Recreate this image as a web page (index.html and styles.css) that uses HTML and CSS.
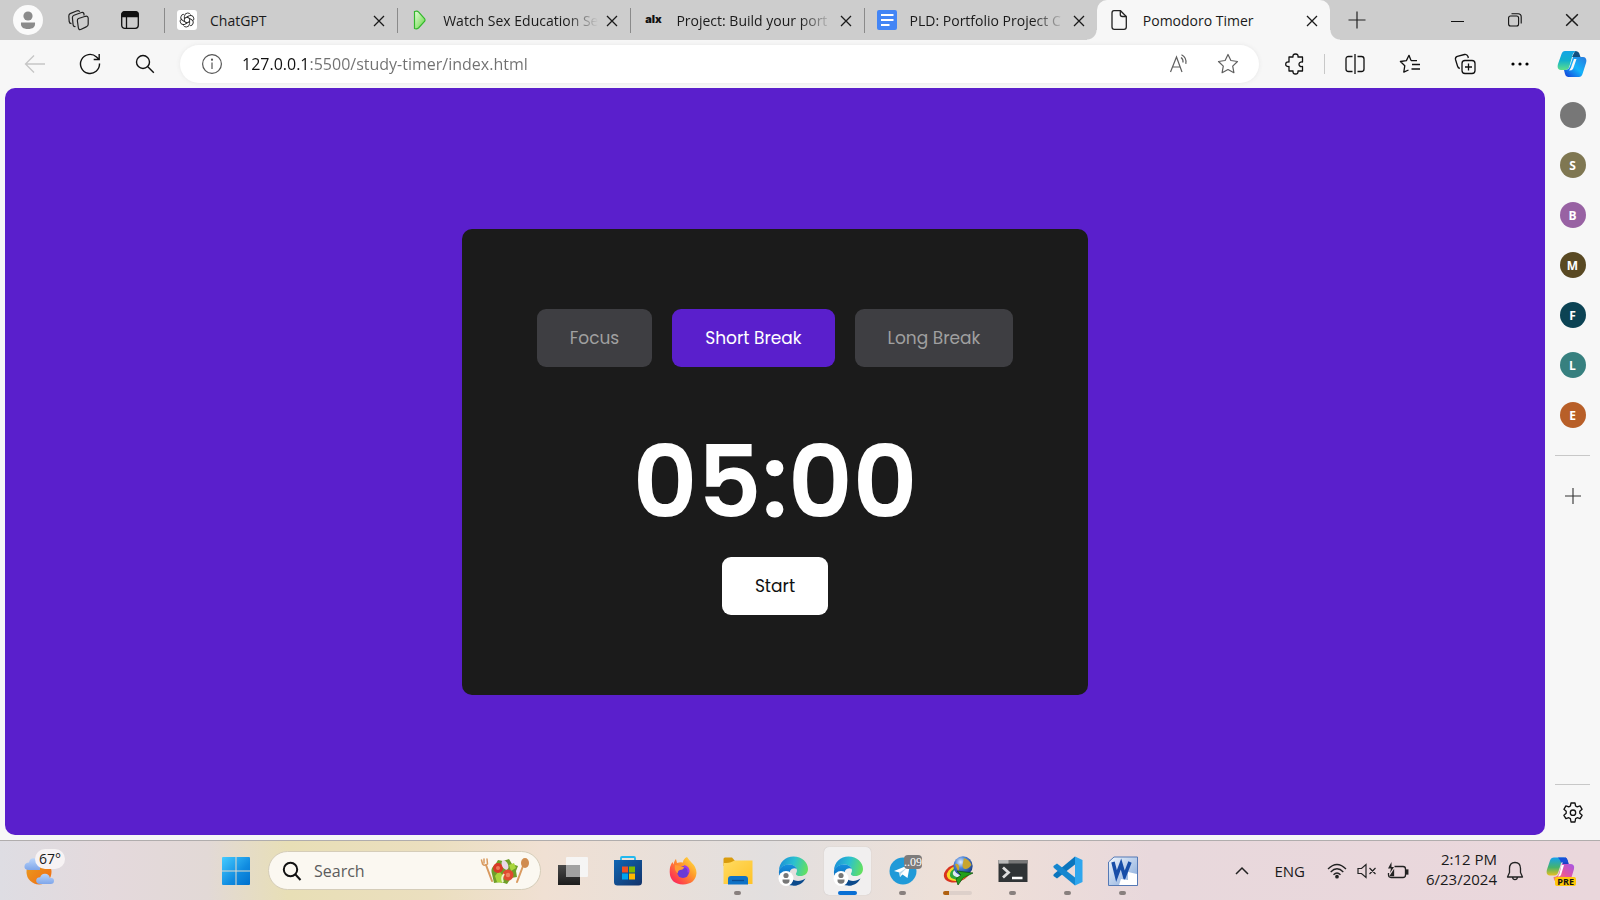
FILE: index.html
```html
<!DOCTYPE html>
<html lang="en">
<head>
<meta charset="utf-8">
<title>Pomodoro Timer</title>
<link rel="stylesheet" href="styles.css">
</head>
<body>
<svg class="defs" width="0" height="0" aria-hidden="true">
  <defs>
    <linearGradient id="edgeTop" x1="0" y1="0.3" x2="1" y2="0.5"><stop offset="0" stop-color="#1b8fd8"/><stop offset=".5" stop-color="#2bc0d0"/><stop offset="1" stop-color="#63e060"/></linearGradient>
    <linearGradient id="edgeMid" x1="0" y1="0" x2="0" y2="1"><stop offset="0" stop-color="#1490df"/><stop offset="1" stop-color="#0c5aa8"/></linearGradient>
    <linearGradient id="cpA" x1="0" y1="0" x2="0" y2="1"><stop offset="0" stop-color="#12a5e6"/><stop offset=".5" stop-color="#12b0cc"/><stop offset="1" stop-color="#5ee08a"/></linearGradient>
    <linearGradient id="cpB" x1="0" y1="1" x2="1" y2="0"><stop offset="0" stop-color="#1238d8"/><stop offset=".5" stop-color="#14b4fa"/><stop offset="1" stop-color="#2a78dc"/></linearGradient>
    <linearGradient id="preA" x1="0" y1="0" x2="0" y2="1"><stop offset="0" stop-color="#14a0ee"/><stop offset=".55" stop-color="#46b36c"/><stop offset="1" stop-color="#e8c020"/></linearGradient>
    <linearGradient id="preB" x1="1" y1="0" x2="0" y2="1"><stop offset="0" stop-color="#a356e8"/><stop offset=".5" stop-color="#e4569f"/><stop offset="1" stop-color="#ff8c52"/></linearGradient>
    <linearGradient id="win" x1="0" y1="0" x2="1" y2="1"><stop offset="0" stop-color="#45ccff"/><stop offset=".6" stop-color="#108be0"/><stop offset="1" stop-color="#0070cc"/></linearGradient>
    <linearGradient id="play" x1="0" y1="0" x2="1" y2="1"><stop offset="0" stop-color="#e8fbdc"/><stop offset="1" stop-color="#62d840"/></linearGradient>
    <linearGradient id="sun" x1="0" y1="0" x2="1" y2="1"><stop offset="0" stop-color="#e8a020"/><stop offset="1" stop-color="#f26a12"/></linearGradient>
    <linearGradient id="cloud" x1="0" y1="0" x2="0" y2="1"><stop offset="0" stop-color="#b9d4fa"/><stop offset="1" stop-color="#7fa6ea"/></linearGradient>
    <linearGradient id="folder" x1="0" y1="0" x2="1" y2="1"><stop offset="0" stop-color="#ffdb62"/><stop offset="1" stop-color="#ffc226"/></linearGradient>
    <linearGradient id="fox" x1="1" y1="0" x2="0" y2="1"><stop offset="0" stop-color="#fff04a"/><stop offset=".4" stop-color="#ff9a2a"/><stop offset=".8" stop-color="#ff3a4e"/><stop offset="1" stop-color="#e8207a"/></linearGradient>
    <linearGradient id="store" x1="0" y1="0" x2="1" y2="1"><stop offset="0" stop-color="#0f66b4"/><stop offset="1" stop-color="#13336a"/></linearGradient>
    <linearGradient id="tvDark" x1="0" y1="0" x2="0" y2="1"><stop offset="0" stop-color="#4a4a4a"/><stop offset="1" stop-color="#1d1d1d"/></linearGradient>
    <linearGradient id="word" x1="0" y1="0" x2="1" y2="1"><stop offset="0" stop-color="#f2f7fd"/><stop offset="1" stop-color="#7fa4d8"/></linearGradient>
    <radialGradient id="globe" cx=".38" cy=".3" r=".75"><stop offset="0" stop-color="#e6f0ff"/><stop offset=".4" stop-color="#4f86d8"/><stop offset="1" stop-color="#16357c"/></radialGradient>
    <symbol id="x" viewBox="0 0 12 12"><path d="M1 1l10 10M11 1L1 11" fill="none" stroke="currentColor" stroke-width="1.3"/></symbol>
    <symbol id="edge" viewBox="0 0 30 30">
      <path d="M1 15C1 6 7.500 .5 15.500 .5 24 .5 30 6.500 30 13c0 4.500-3.500 7-7.500 7-3 0-5-1.200-4.500-2.600.8-1.600 1.200-2.400.8-4C18 10 14.500 8.500 11 8.500 6 8.500 2 11.500 1 15z" fill="url(#edgeTop)"/>
      <path d="M1 15c1-4 5-6.500 10-6.500 4 0 7 2 7.700 4.500C17 11.800 13 12 11.500 16c-1.500 5 3 11 8 13C9 31.500 0 25 1 15z" fill="url(#edgeMid)"/>
      <path d="M12 15c-2 6 3 10 8 10 3 0 5-1 7.500-2.500C25 27.500 20 30 15.500 29.500 9 28 8 19 12 15z" fill="#0b4a8c"/>
      <circle cx="8" cy="22.500" r="7.500" fill="#fff"/><circle cx="8" cy="19.500" r="2.600" fill="#777"/><path d="M4.500 23.500h7c.4 3-1.200 4.200-3.500 4.200s-3.900-1.200-3.500-4.200z" fill="#777"/>
    </symbol>
  </defs>
</svg>

<main class="browser">
  <header class="tabbar">
    <button class="strip-btn" aria-label="Profile"><svg width="30" height="30" viewBox="0 0 30 30"><circle cx="15" cy="15" r="15" fill="#fafafa"/><circle cx="15" cy="11" r="4.600" fill="#8b8b8b"/><path d="M8 17.500h14c.6 4.500-2.200 6.500-7 6.500s-7.600-2-7-6.500z" fill="#8b8b8b"/></svg></button>
    <button class="strip-btn" aria-label="Workspaces"><svg width="22" height="22" viewBox="0 0 22 22" fill="none" stroke="#222" stroke-width="1.200" stroke-linejoin="round"><path d="M10.500 9.500l7-2.200q2.500-.5 2.700 2v6q0 2-2 2.600l-5.500 2.600q-2 .5-2.300-1.500l-1-7q-.2-2 1.100-2.500z"/><path d="M7.500 17.500q-2 .3-2.400-1.700l-.7-7Q4.300 6.800 6 6.200l7.500-2.700q2-.5 2.500 1.500v1.500"/><path d="M3.500 14.700q-2 0-2.300-2l-.4-5.500q0-2 1.300-2.600l7-2.800q2-.5 2.600 1"/></svg></button>
    <button class="strip-btn" aria-label="Tab actions"><svg width="18" height="18" viewBox="0 0 18 18" fill="none" stroke="#111" stroke-width="1.300"><rect x=".7" y=".7" width="16.600" height="16.600" rx="3"/><path d="M1 3.500Q1 1 3.500 1h11Q17 1 17 3.500V5.500H1z" fill="#111"/><path d="M5.500 5v12"/></svg></button>
    <nav class="tabs" aria-label="Tabs">
      <div class="tab">
        <svg class="fav" viewBox="0 0 20 20"><rect width="20" height="20" rx="3" fill="#fff"/><g fill="none" stroke="#222" stroke-width=".9"><path id="petal" d="M7.400 11.500V6.300Q7.700 3 10.700 3q1.900 0 2.900 1.500"/><use href="#petal" transform="rotate(60 10 10)"/><use href="#petal" transform="rotate(120 10 10)"/><use href="#petal" transform="rotate(180 10 10)"/><use href="#petal" transform="rotate(240 10 10)"/><use href="#petal" transform="rotate(300 10 10)"/></g></svg>
        <button class="title">ChatGPT</button><button class="close" aria-label="Close tab"><svg width="12" height="12"><use href="#x"/></svg></button>
      </div>
      <div class="tab">
        <svg class="fav" viewBox="0 0 20 20"><path d="M4.500 1.500q3-1 4 .5l6 6.500q1 1.500 0 3l-6 6.500q-2 1.500-4 .5z" fill="url(#play)" stroke="#32b82c" stroke-width="1.200"/></svg>
        <button class="title fade">Watch Sex Education Se</button><button class="close" aria-label="Close tab"><svg width="12" height="12"><use href="#x"/></svg></button>
      </div>
      <div class="tab">
        <span class="fav alx">alx</span>
        <button class="title fade">Project: Build your port</button><button class="close" aria-label="Close tab"><svg width="12" height="12"><use href="#x"/></svg></button>
      </div>
      <div class="tab">
        <svg class="fav" viewBox="0 0 20 20"><rect width="20" height="20" rx="2" fill="#4385f5"/><path d="M4 5h12.500M4 10h12.500M4 15h8.500" stroke="#fff" stroke-width="2.200"/></svg>
        <button class="title fade">PLD: Portfolio Project C</button><button class="close" aria-label="Close tab"><svg width="12" height="12"><use href="#x"/></svg></button>
      </div>
      <div class="tab active">
        <svg class="fav" viewBox="0 0 20 20" fill="none" stroke="#222" stroke-width="1.300"><path d="M4 .7h6.500L16.300 6.500V17q0 2.300-2.300 2.300H4.300Q2 19.300 2 17V3Q2 .7 4 .7z"/><path d="M10.300 1v3.500q0 2 2 2h4"/></svg>
        <button class="title">Pomodoro Timer</button><button class="close" aria-label="Close tab"><svg width="12" height="12"><use href="#x"/></svg></button>
      </div>
    </nav>
    <button class="newtab" aria-label="New tab"><svg width="18" height="18"><path d="M9 .5v17M.5 9h17" stroke="#222" stroke-width="1.200"/></svg></button>
    <div class="window-controls">
      <button aria-label="Minimize"><svg width="13" height="13"><path d="M0 7.500h13" stroke="#111"/></svg></button>
      <button aria-label="Restore"><svg width="14" height="14" fill="none" stroke="#111" stroke-width="1.100"><rect x=".6" y="3" width="10" height="10" rx="2"/><path d="M3.500 .8H10q3.200 0 3.200 3.200v6.500"/></svg></button>
      <button aria-label="Close"><svg width="14" height="14"><use href="#x"/></svg></button>
    </div>
  </header>

  <div class="toolbar">
    <button class="tool" aria-label="Back"><svg width="22" height="20" fill="none" stroke="#c6c6c6" stroke-width="1.300"><path d="M21 10H2M10 1.500L1.500 10l8.500 8.500"/></svg></button>
    <button class="tool" aria-label="Refresh"><svg width="22" height="22" fill="none" stroke="#111" stroke-width="1.400"><path d="M20.500 10.500A9.500 9.500 0 1 1 17.500 4l2.500 2.300M20.200 1v5.500h-5.500"/></svg></button>
    <button class="tool" aria-label="Search"><svg width="20" height="20" fill="none" stroke="#111" stroke-width="1.400"><circle cx="8" cy="8" r="6.500"/><path d="M12.800 12.800l6 6"/></svg></button>
    <div class="address">
      <button aria-label="Site information"><svg width="22" height="22" fill="none" stroke="#555" stroke-width="1.200"><circle cx="11" cy="11" r="9.400"/><path d="M11 9.500V16" /><circle cx="11" cy="6.700" r=".5" fill="#555"/></svg></button>
      <input class="url" type="text" aria-label="Address" value="127.0.0.1:5500/study-timer/index.html">
      <button class="read" aria-label="Read aloud"><svg width="22" height="20" viewBox="0 0 22 20" fill="none" stroke="#5f5f5f" stroke-width="1.200"><path d="M1.500 18L7.500 3 13 18M3.500 13h7.500M12 3.500q2.500 1.800 2 5M12.500 .8q5.500 3 4.300 9"/></svg></button>
      <button class="star" aria-label="Favorite"><svg width="22" height="22" viewBox="0 0 22 22" fill="none" stroke="#5f5f5f" stroke-width="1.200" stroke-linejoin="round"><path d="M11 1.500l2.900 6 6.600 1-4.800 4.600 1.200 6.600-5.900-3.200-5.900 3.200 1.200-6.600L1.500 8.500l6.600-1z"/></svg></button>
    </div>
    <button class="tool" aria-label="Extensions"><svg width="20" height="22" viewBox="0 0 20 22" fill="none" stroke="#111" stroke-width="1.300" stroke-linejoin="round"><path d="M4 4h4q-.5-3 2.500-3T13 4h4.500v5q-3.500-.3-3.500 2.300t3.500 2.200V18H13q.4 3-2.500 3T8 18H4v-4.500q-3.300.3-3.300-2.300T4 9z"/></svg></button>
    <span class="rule"></span>
    <button class="tool" aria-label="Split screen"><svg width="20" height="20" fill="none" stroke="#111" stroke-width="1.300"><path d="M7.500 2.500H3.500q-2.500 0-2.500 2.500v10q0 2.500 2.500 2.500h4M12.500 2.500h4q2.500 0 2.500 2.500v10q0 2.500-2.500 2.500h-4M10 0v20"/></svg></button>
    <button class="tool" aria-label="Favorites"><svg width="22" height="20" viewBox="0 0 22 20" fill="none" stroke="#111" stroke-width="1.300" stroke-linejoin="round"><path d="M12 6.500L10 1.300 7.400 6.600l-6 .9 4.400 4.200-1 6.500L9.500 16M12 6.500l6 .2M13 10.500h8M12.500 15h8.500"/></svg></button>
    <button class="tool" aria-label="Collections"><svg width="22" height="22" viewBox="0 0 22 22" fill="none" stroke="#111" stroke-width="1.300" stroke-linejoin="round"><rect x="8" y="7.500" width="13" height="13" rx="3"/><path d="M14.500 10.500v7M11 14h7M5.800 15.500Q4 15 3.500 13L1.500 6.500Q1 4 3.300 3.300L10.500 1.500Q13 1 14 3.500l.3 1.500"/></svg></button>
    <button class="tool" aria-label="Settings and more"><svg width="20" height="6"><circle cx="3" cy="3" r="1.600"/><circle cx="10" cy="3" r="1.600"/><circle cx="17" cy="3" r="1.600"/></svg></button>
    <button class="tool copilot" aria-label="Copilot"><svg width="30" height="28" viewBox="0 0 30 28"><path d="M18 1q3.500 0 4.300 2.500L23.500 7H15z" fill="#124f80"/><path d="M8 1h11q-3 1-4 6l-2.500 9q-1 4-4 4H4Q-.5 19.500 1 14L4.500 4Q5.500 1 8 1z" fill="url(#cpA)"/><path d="M22 27H11q-2.500-.2-3-3l-1-4h2q3-.5 4-4l3-9h10q4.500 .5 3 6l-3.500 11Q24.500 27 22 27z" fill="url(#cpB)"/><path d="M17 9h2.500l-3.500 10q-1 1.500-4 1.500 2-2 2.500-4.500z" fill="#f7f7f7"/></svg></button>
  </div>

  <div class="content">
    <section class="page">
      <div class="card">
        <div class="modes">
          <button class="btn muted">Focus</button>
          <button class="btn current">Short Break</button>
          <button class="btn muted">Long Break</button>
        </div>
        <div class="time">05:00</div>
        <button class="btn start">Start</button>
      </div>
    </section>
    <aside class="sidebar">
      <button class="avatar grey" aria-label="Contact"></button>
      <button class="avatar olive">S</button>
      <button class="avatar purple">B</button>
      <button class="avatar brown">M</button>
      <button class="avatar navy">F</button>
      <button class="avatar teal">L</button>
      <button class="avatar orange">E</button>
      <hr>
      <button class="side-btn" aria-label="Add"><svg width="16" height="16"><path d="M8 0v16M0 8h16" stroke="#333" stroke-width="1.100"/></svg></button>
      <hr class="low">
      <button class="side-btn" aria-label="Settings"><svg width="22" height="22" viewBox="0 0 22 22" fill="none" stroke="#111" stroke-width="1.300" stroke-linejoin="round"><path d="M9 1h4l.6 3 1.600.9 2.900-1 2 3.400-2.300 2v2l2.300 2-2 3.400-2.900-1-1.600.9-.6 3.400H9l-.6-3.400-1.600-.9-2.900 1-2-3.400 2.300-2v-2l-2.300-2 2-3.400 2.900 1L8.400 4z"/><circle cx="11" cy="10.700" r="2.700"/></svg></button>
    </aside>
  </div>
</main>

<footer class="taskbar">
  <button class="weather" aria-label="Weather">
    <svg width="32" height="30" viewBox="0 0 32 30"><circle cx="15" cy="16" r="12.500" fill="url(#sun)"/><path d="M4 14q-4-.5-3.500-4T5 6.500q1-5 6-4t5 5.500 0 6z" fill="url(#cloud)"/><path d="M16 28q-4-.3-3.800-3.500t4-3.200q1-3.800 5-3.500t4.600 4q4.200-.2 4.200 3t-3.500 3.200z" fill="url(#cloud)"/></svg>
    <span class="temp">67°</span>
  </button>
  <button class="task" aria-label="Start menu"><svg width="30" height="30" viewBox="0 0 30 30"><path fill="url(#win)" d="M2 1h12.500v13.500H1V2q0-1 1-1zM15.500 1H28q1 0 1 1v12.500H15.500zM1 15.500h13.500V29H2q-1 0-1-1zM15.500 15.500H29V28q0 1-1 1H15.500z"/></svg></button>
  <label class="search">
    <svg width="20" height="20" fill="none" stroke="#111" stroke-width="2"><circle cx="8.500" cy="8.500" r="6.700"/><path d="M13 13l5.500 6"/></svg>
    <input type="text" placeholder="Search" aria-label="Search">
    <svg width="50" height="28" viewBox="0 0 50 28"><g stroke="#d99a5f" stroke-linecap="round" fill="none"><path d="M6 8l6 16" stroke-width="2"/><path d="M1.500 3l1 4q2 2.500 5 0L7 2M4 2v4" stroke-width="1.500"/><path d="M43 9l-6 16" stroke-width="2"/></g><ellipse cx="45" cy="6" rx="4" ry="5" fill="#d08c50"/><path d="M12 17q-2-6 3-9l3-5 5 1 6-2 3 5 6 2-2 5 1 6-6 1-4 6-6-2-7 1z" fill="#6f9f28"/><path d="M15 19l4-5 4 5-1 7-5-1zM29 8l5-2 2 5-5 3z" fill="#a9d63c"/><circle cx="18" cy="11" r="5" fill="#d83a25"/><circle cx="28" cy="18" r="5.500" fill="#e04a30"/><circle cx="18" cy="11" r="2" fill="#ec7a58"/><circle cx="28" cy="18" r="2.200" fill="#ee8260"/><ellipse cx="25" cy="8" rx="3" ry="5" fill="#e9d9e5" transform="rotate(-25 25 8)"/><path d="M24 17q-3 4-1 8" stroke="#eef6c8" stroke-width="2" fill="none"/></svg>
  </label>
  <nav class="apps" aria-label="Apps">
    <button class="task" aria-label="Task view"><svg width="30" height="30" viewBox="0 0 30 30"><rect y="9" width="22" height="20" fill="url(#tvDark)"/><rect x="8" y="1" width="22" height="20" rx="1" fill="#f5f5f5" opacity=".95"/><path d="M8 9h14v12H8z" fill="#a2a2a2"/></svg></button>
    <button class="task" aria-label="Store"><svg width="30" height="30" viewBox="0 0 30 30"><path d="M8 6V2q0-1 1-1h12q1 0 1 1v4" fill="none" stroke="#22b8ee" stroke-width="1.800"/><path d="M1 4h28v22q0 3.500-3.500 3.500h-21Q1 29.500 1 26z" fill="url(#store)"/><path d="M9 10.500h6v6H9z" fill="#f25022"/><path d="M16 10.500h6v6h-6z" fill="#7fba00"/><path d="M9 17.500h6v6H9z" fill="#00a4ef"/><path d="M16 17.500h6v6h-6z" fill="#ffb900"/></svg></button>
    <button class="task" aria-label="Firefox"><svg width="28" height="28" viewBox="0 0 28 28"><path d="M18 0q2 3 4.500 5.500Q27.500 10 27.500 16q-1 11-13.500 11.500Q1 27 .7 15 .5 9 3.500 5l1 2.500Q5.500 3 7 2l1 4q3-1 6-.5 0-3.500 4-5.500z" fill="url(#fox)"/><circle cx="14" cy="15" r="6" fill="#6a3ad6"/><path d="M6 8q4 0 7 1.500l2.500 1q-2 2.500-4.500 2.500-2.500.5-2 3.500Q5 14 6 8z" fill="#ff9a35"/><path d="M15 9q5 1 4.500 6.500" fill="none" stroke="#a03ae8" stroke-width="2"/></svg></button>
    <button class="task run" aria-label="File Explorer"><svg width="30" height="30" viewBox="0 0 30 30"><path d="M.5 10V3q0-1.500 1.500-1.500h7L12 5l-3 5z" fill="#d99b0c"/><path d="M.5 7q6 0 9-1.500l2-1h18V28H.5z" fill="url(#folder)"/><path d="M5 28.500V23q0-3 3-3h14q3 0 3 3v5.500z" fill="#0f72c6"/><path d="M9 24.500h12" stroke="#0a4d93" stroke-width="1.300"/></svg></button>
    <button class="task" aria-label="Edge"><svg width="30" height="30"><use href="#edge"/></svg></button>
    <button class="task focused" aria-label="Edge, active"><svg width="30" height="30"><use href="#edge"/></svg></button>
    <button class="task run" aria-label="Telegram"><svg width="28" height="28" viewBox="0 0 28 28"><circle cx="14" cy="14" r="13.500" fill="#209ad8"/><path d="M5 14l16-6.500-2.500 13.500-5-3.500-2.500 2.500-.7-4.500z" fill="#fff"/><path d="M10.300 15.500l8-5-6 6-1.300 3.500z" fill="#b8d8ea"/></svg><span class="count">..09</span></button>
    <button class="task progress" aria-label="Download Manager"><svg width="30" height="30" viewBox="0 0 30 30"><ellipse cx="14" cy="17" rx="13.500" ry="9" fill="#d9331f" transform="rotate(-18 14 17)"/><ellipse cx="15" cy="17" rx="11.500" ry="7.500" fill="#f6d928" transform="rotate(-18 15 17)"/><ellipse cx="16" cy="17" rx="9.500" ry="6" fill="#2fa83a" transform="rotate(-18 16 17)"/><ellipse cx="17" cy="16" rx="7.500" ry="4.500" fill="#dfe8f4" transform="rotate(-18 17 16)"/><circle cx="20" cy="10" r="9.700" fill="url(#globe)"/><path d="M21 2q6 2 7.500 7-3 4-6 4t-3-4zM12 8q3-1 4 2t-1 5z" fill="#c9a52e"/><path d="M14 15l16 2-10 5-5 7-2-6 5-4z" fill="#24a01a" stroke="#0a4a10" stroke-width=".7"/></svg></button>
    <button class="task run" aria-label="Terminal"><svg width="30" height="30" viewBox="0 0 30 30"><path d="M.5 4h29v22H.5z" fill="#303436"/><path d="M.5 4h29v3.500H.5z" fill="#777"/><path d="M.5 4h10v3.500h-10z" fill="#b8b8b8"/><path d="M5 11.500l5.500 5-5.500 5" fill="none" stroke="#ddd" stroke-width="2.800"/><path d="M14 22h10.500" stroke="#fff" stroke-width="2.500"/></svg></button>
    <button class="task run" aria-label="Visual Studio Code"><svg width="30" height="30" viewBox="0 0 30 30"><path d="M22 .5L29.500 4v22L22 29.500z" fill="#2fa6ee"/><path d="M22 .5v8L4 22.500.5 20q-.5-1 .5-2z" fill="#0b75bd"/><path d="M22 29.500v-8L4 7.500.5 10q-.5 1 .5 2z" fill="#1586cf"/></svg></button>
    <button class="task run" aria-label="Word"><svg width="30" height="30" viewBox="0 0 30 30"><path d="M6 1h23.500v28.500h-29V6z" fill="url(#word)" stroke="#5579b5"/><path d="M5 6l3.500 14L13 8l3.500 12L22 6" fill="none" stroke="#174ea8" stroke-width="3.500"/><path d="M20 16l9 2v11H11l2-6 7 1z" fill="#fff"/></svg></button>
  </nav>
  <div class="tray">
    <button aria-label="Show hidden icons"><svg width="14" height="9" fill="none" stroke="#222" stroke-width="1.500"><path d="M1 8l6-6 6 6"/></svg></button>
    <button class="lang">ENG</button>
    <button class="status" aria-label="Network, volume and battery">
      <svg width="20" height="16" viewBox="0 0 20 16" fill="none" stroke="#222" stroke-width="1.300"><path d="M1 6q9-9 18 0M3.700 9q6.300-6.500 12.600 0M6.500 11.700q3.500-3.500 7 0"/><circle cx="10" cy="13.700" r="1.200" fill="#222"/></svg>
      <svg width="20" height="16" viewBox="0 0 20 16" fill="none" stroke="#222" stroke-width="1.200"><path d="M1 5.500h3.500L9 1.500v13l-4.500-4H1zM12.500 5l6 6M18.500 5l-6 6"/></svg>
      <svg width="22" height="18" viewBox="0 0 22 18" fill="none" stroke="#222" stroke-width="1.300"><path d="M7.500 4.500H16q2.500 0 2.500 2.500v6q0 2.500-2.500 2.500H4q-2.500 0-2.500-2.500v-2"/><path d="M19.500 8v4h1.300V8z" fill="#222"/><path d="M4.500 0L1 6.500h3L3 11l4-6H4.500z" fill="#222" stroke="none"/><path d="M3.500 13.500h3V9z" fill="#222"/></svg>
    </button>
    <button class="clock"><span>2:12 PM</span><span>6/23/2024</span></button>
    <button aria-label="Notifications"><svg width="18" height="20" viewBox="0 0 18 20" fill="none" stroke="#222" stroke-width="1.300" stroke-linejoin="round"><path d="M3.500 7.500q0-6 5.500-6t5.500 6v4L16.500 16h-15l2-4.500zM6.500 16q.3 2.700 2.500 2.700t2.500-2.700"/></svg></button>
    <button class="pre" aria-label="Copilot preview"><svg width="30" height="30" viewBox="0 0 30 30"><path d="M19 1.500q2 0 3 4l1 3h-7z" fill="#1a3fc4"/><path d="M8 1.500h11q-3 1-4 6l-2.500 8q-1 4-4 4H4Q-.5 19 1 13.500L4 4.500q1-3 4-3z" fill="url(#preA)"/><path d="M12 1.500h7q2 0 3 5h-7q-1-3-3-5z" fill="#1850d8"/><path d="M22 26H11q-3 0-3.500-5 4.500 0 5.500-4l3-9h8q5 0 4 5l-3 10q-1 3-3 3z" fill="url(#preB)"/><path d="M15.500 9h2.500l-3 10q-1 1.500-3 1.500 1.500-2 2-5z" fill="#fff"/></svg><span class="pre-tag">PRE</span></button>
  </div>
</footer>
</body>
</html>
```

FILE: styles.css
```css
* { box-sizing: border-box; }

body {
  margin: 0;
  min-height: 100vh;
  display: flex;
  flex-direction: column;
  background: #f7f7f7;
  color: #1a1a1a;
  font-family: "Segoe UI", "Open Sans", "Noto Sans", sans-serif;
  font-size: 14px;
}

.defs { position: absolute; }

button {
  display: flex;
  align-items: center;
  justify-content: center;
  margin: 0;
  padding: 0;
  border: 0;
  background: none;
  color: inherit;
  font: inherit;
}

input {
  min-width: 0;
  flex: 1;
  padding: 0;
  border: 0;
  outline: 0;
  background: none;
  font: inherit;
}

.browser {
  flex: 1;
  display: flex;
  flex-direction: column;
}

/* Tab strip */
.tabbar {
  height: 40px;
  display: flex;
  align-items: center;
  padding-left: 2px;
  background: #cdcdcd;
}
.strip-btn { width: 51px; height: 40px; }
.tabs {
  flex: 1;
  max-width: 1166px;
  align-self: stretch;
  display: grid;
  grid-template-columns: repeat(5, minmax(0, 1fr));
  margin-left: 9px;
}
.tab {
  display: flex;
  align-items: center;
  padding: 0 8px 0 13px;
  background: linear-gradient(#8a8a8a, #8a8a8a) 0 50% / 1px 25px no-repeat;
}
.tab.active {
  position: relative;
  background: #f7f7f7;
  border-radius: 10px 10px 0 0;
}
.tab.active::before,
.tab.active::after {
  content: "";
  position: absolute;
  bottom: 0;
  width: 10px;
  height: 10px;
}
.tab.active::before { right: 100%; background: radial-gradient(circle at 0 0, transparent 9px, #f7f7f7 10px); }
.tab.active::after { left: 100%; background: radial-gradient(circle at 100% 0, transparent 9px, #f7f7f7 10px); }
.fav { flex: none; width: 20px; height: 20px; }
.alx {
  color: #111;
  font: 900 11px/18px Inter, sans-serif;
  text-align: center;
}
.title {
  flex: 1;
  min-width: 0;
  justify-content: flex-start;
  margin: 0 4px 0 13px;
  white-space: nowrap;
}
.title.fade { mask-image: linear-gradient(90deg, #000 calc(100% - 32px), transparent); }
.close { width: 20px; height: 20px; padding-top: 1px; }
.newtab { width: 54px; height: 40px; }
.window-controls { display: flex; margin-left: auto; }
.window-controls button { width: 57px; height: 40px; }

/* Toolbar */
.toolbar {
  height: 48px;
  display: flex;
  align-items: center;
  padding-left: 7px;
}
.tool { flex: none; width: 55px; height: 40px; }
.tool.copilot { width: 53px; justify-content: flex-start; padding-left: 10px; }
.address {
  flex: 1;
  height: 38px;
  display: flex;
  align-items: center;
  margin: 0 8px;
  padding: 0 20px 0 21px;
  border-radius: 19px;
  background: #fff;
  box-shadow: 0 0 4px #e6e6e6;
}
.url {
  margin-left: 19px;
  font-size: 16px;
  line-height: 26px;
  color: transparent;
  background: linear-gradient(90deg, #111 68px, #707070 68px);
  background-clip: text;
}
.star { margin-left: 26px; }
.rule { width: 1px; height: 20px; margin: 0 2px; background: #c8c8c8; }

/* Page and side rail */
.content { flex: 1; display: flex; }
.page {
  flex: 1;
  display: flex;
  align-items: center;
  justify-content: center;
  margin: 0 0 5px 5px;
  border-radius: 10px;
  background: #5a1fcc;
}
.card {
  display: flex;
  flex-direction: column;
  align-items: center;
  padding: 80px 75px;
  border-radius: 10px;
  background: #1b1b1b;
  font-family: Poppins, Inter, sans-serif;
}
.modes { display: flex; gap: 20px; }
.btn {
  padding: 16px 33px;
  border-radius: 9px;
  font-size: 17px;
  line-height: 26px;
}
.btn.muted { background: #3e3e42; color: #a0a0a0; }
.btn.current { background: #5a1fcc; color: #fff; }
.btn.start { background: #fff; color: #111; }
.time {
  margin-top: 40px;
  color: #fff;
  font-size: 100px;
  font-weight: 600;
  line-height: 150px;
}

.sidebar {
  width: 55px;
  display: flex;
  flex-direction: column;
  align-items: center;
  padding: 14px 0 10px;
}
.avatar {
  width: 26px;
  height: 26px;
  margin-bottom: 24px;
  border-radius: 50%;
  color: #fff;
  font-size: 12px;
  font-weight: 700;
}
.grey { background: #777; }
.olive { background: #7f7752; }
.purple { background: #9862a3; }
.brown { background: #594923; }
.navy { background: #0c4354; }
.teal { background: #37807f; }
.orange { background: #b85f28; }
.sidebar hr { width: 35px; margin: 3px 0 23px; border: 0; border-top: 1px solid #c8c8c8; }
.sidebar hr.low { margin: auto 0 11px; }
.side-btn { width: 32px; height: 34px; }

/* Taskbar */
.taskbar {
  height: 60px;
  display: flex;
  align-items: center;
  border-top: 1px solid #b0adad;
  background: linear-gradient(90deg, #dedde3 0, #e4d9dc 7%, #e2d9d6 13%, #e8dfb6 18%, #ebdfbf 27%, #f0e0d3 34%, #e2dfdf 48%, #efe0d7 60%, #e8d8dc 72%, #ead7dc 100%);
}
.weather {
  position: relative;
  width: 42px;
  margin: 0 150px 0 20px;
  justify-content: flex-start;
  padding-left: 4px;
}
.temp {
  position: absolute;
  left: 15px;
  top: -7px;
  padding: 0 4px;
  border-radius: 10px;
  background: #f7f3f4;
  line-height: 20px;
}
.search {
  flex: none;
  width: 273px;
  height: 39px;
  display: flex;
  align-items: center;
  gap: 12px;
  margin: 0 8px 0 9px;
  padding: 0 10px 0 13px;
  border: 1px solid #d5cdb9;
  border-radius: 20px;
  background: #fbf8f1;
}
.search input { font-size: 16px; line-height: 24px; }
.search input::placeholder { color: #5c5c5c; opacity: 1; }
.apps { display: flex; gap: 8px; }
.task {
  flex: none;
  position: relative;
  width: 47px;
  height: 48px;
  border-radius: 5px;
}
.focused { background: #f1efef; box-shadow: 0 0 1px #b8b4b4; }
.run::after,
.focused::after {
  content: "";
  position: absolute;
  bottom: 0;
  left: 20px;
  width: 7px;
  height: 4px;
  border-radius: 2px;
  background: #88807e;
}
.focused::after { left: 14px; width: 19px; background: #0a6fd4; }
.progress::after {
  content: "";
  position: absolute;
  bottom: 0;
  left: 9px;
  width: 29px;
  height: 4px;
  border-radius: 2px;
  background: linear-gradient(90deg, #b06010 6px, #ddd0ca 6px);
}
.count {
  position: absolute;
  top: 8px;
  left: 25px;
  border-radius: 4px;
  background: #7d7b7b;
  color: #fff;
  font: 12px/14px "Liberation Serif", serif;
}
.tray {
  display: flex;
  align-items: center;
  margin-left: auto;
  padding-right: 24px;
  font-size: 15px;
}
.lang { margin: 0 22px 0 25px; }
.status { gap: 10px; }
.clock {
  flex-direction: column;
  align-items: flex-end;
  margin: 0 9px 0 17px;
  padding-bottom: 3px;
  line-height: 20px;
}
.pre { position: relative; margin-left: 22px; }
.pre-tag {
  position: absolute;
  right: 0;
  bottom: 0;
  padding: 0 2px;
  border-radius: 2px;
  background: #ffc80a;
  color: #111;
  font-size: 9px;
  font-weight: 700;
  line-height: 9px;
}
```
